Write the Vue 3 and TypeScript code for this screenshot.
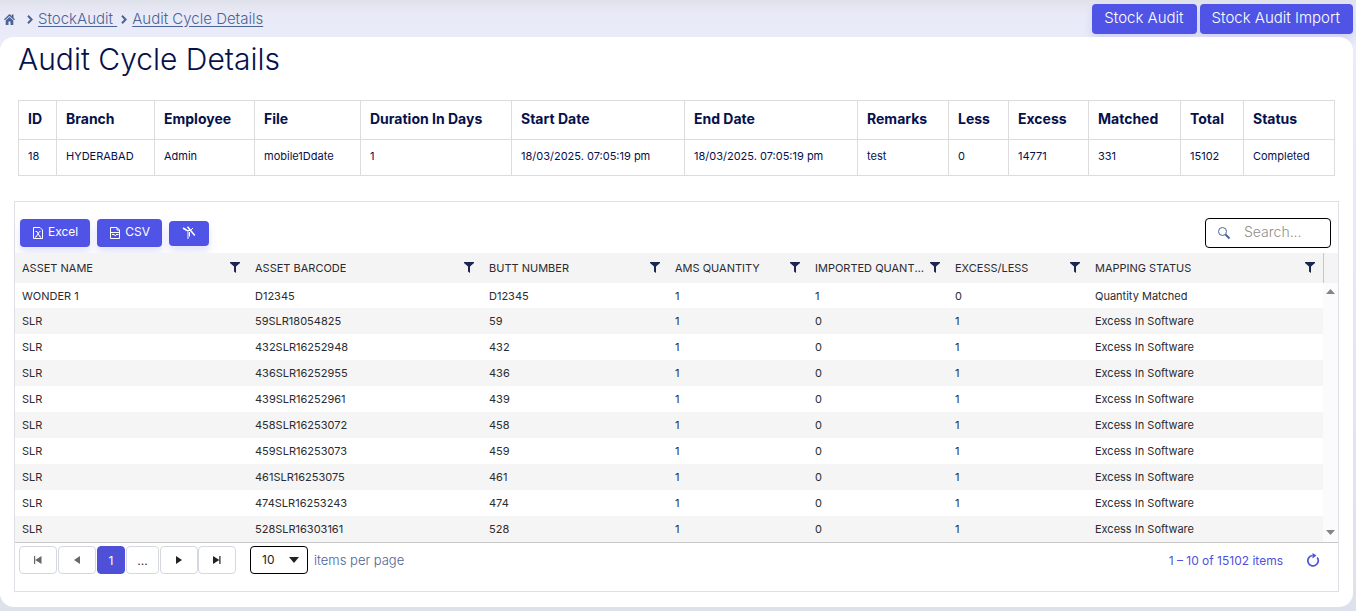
<script setup lang="ts">
import { ref } from 'vue'

interface Column {
  title: string
  width: number
}

const summary: { title: string; value: string; width: number }[] = [
  { title: 'ID', value: '18', width: 38 },
  { title: 'Branch', value: 'HYDERABAD', width: 98 },
  { title: 'Employee', value: 'Admin', width: 100 },
  { title: 'File', value: 'mobile1Ddate', width: 106 },
  { title: 'Duration In Days', value: '1', width: 151 },
  { title: 'Start Date', value: '18/03/2025. 07:05:19 pm', width: 173 },
  { title: 'End Date', value: '18/03/2025. 07:05:19 pm', width: 173 },
  { title: 'Remarks', value: 'test', width: 91 },
  { title: 'Less', value: '0', width: 60 },
  { title: 'Excess', value: '14771', width: 80 },
  { title: 'Matched', value: '331', width: 92 },
  { title: 'Total', value: '15102', width: 63 },
  { title: 'Status', value: 'Completed', width: 91 },
]
const summaryTotal = summary.reduce((sum, c) => sum + c.width, 0)

const columns: Column[] = [
  { title: 'ASSET NAME', width: 233 },
  { title: 'ASSET BARCODE', width: 234 },
  { title: 'BUTT NUMBER', width: 186 },
  { title: 'AMS QUANTITY', width: 140 },
  { title: 'IMPORTED QUANTITY', width: 140 },
  { title: 'EXCESS/LESS', width: 140 },
  { title: 'MAPPING STATUS', width: 235 },
]
const columnTotal = columns.reduce((sum, c) => sum + c.width, 0)

const excess = (barcode: string, butt: string): string[] => [
  'SLR', barcode, butt, '1', '0', '1', 'Excess In Software',
]
const rows: string[][] = [
  ['WONDER 1', 'D12345', 'D12345', '1', '1', '0', 'Quantity Matched'],
  excess('59SLR18054825', '59'),
  excess('432SLR16252948', '432'),
  excess('436SLR16252955', '436'),
  excess('439SLR16252961', '439'),
  excess('458SLR16253072', '458'),
  excess('459SLR16253073', '459'),
  excess('461SLR16253075', '461'),
  excess('474SLR16253243', '474'),
  excess('528SLR16303161', '528'),
]

const percent = (part: number, total: number) => ({ width: `${(part / total) * 100}%` })
const search = ref('')
const pageSize = ref('10')
</script>

<template>
  <div class="page">
    <header class="topbar">
      <nav class="crumbs" aria-label="Breadcrumb">
        <a href="#" class="home" aria-label="Home">
          <svg width="12" height="11" viewBox="0 0 12 11">
            <path d="M5.500 0 0 5.200l.9 1L5.500 2l4.600 4.200.9-1L9.500 3.700V.5H7.800v1.600zM5.500 3 1.700 6.500V11H4.500V7.500h2V11h2.800V6.500z" fill="currentColor" />
          </svg>
        </a>
        <svg class="chevron" width="6" height="9" viewBox="0 0 6 9"><path d="M1 .8 4.600 4.500 1 8.200" /></svg>
        <a href="#" class="crumb">StockAudit&nbsp;</a>
        <svg class="chevron" width="6" height="9" viewBox="0 0 6 9"><path d="M1 .8 4.600 4.500 1 8.200" /></svg>
        <a href="#" class="crumb">Audit Cycle Details</a>
      </nav>
      <div class="actions">
        <button type="button" class="primary large">Stock Audit</button>
        <button type="button" class="primary large">Stock Audit Import</button>
      </div>
    </header>

    <main class="panel">
      <h1>Audit Cycle Details</h1>

      <table class="summary">
        <colgroup>
          <col v-for="c in summary" :key="c.title" :style="percent(c.width, summaryTotal)" />
        </colgroup>
        <thead>
          <tr><th v-for="c in summary" :key="c.title" scope="col">{{ c.title }}</th></tr>
        </thead>
        <tbody>
          <tr><td v-for="c in summary" :key="c.title">{{ c.value }}</td></tr>
        </tbody>
      </table>

      <section class="grid">
        <div class="toolbar">
          <button type="button" class="primary tool">
            <svg width="12" height="14" viewBox="0 0 12 14" class="line">
              <path d="M1.500 1.500h6.500l2.500 2.500v8.500h-9zM3.500 5.500h1.500l3 5.500h1M8.500 5.500h-1l-3.500 5.500h-1" />
            </svg>
            <span>Excel</span>
          </button>
          <button type="button" class="primary tool">
            <svg width="12" height="14" viewBox="0 0 12 14" class="line">
              <path d="M1.500 1.500h6.500l2.500 2.500v8.500h-9zM8 1.500V4h2.500M1.500 6.500h9M3 8.500h2.500M5.500 9.500h1.500M7 8.500h2.500" />
            </svg>
            <span>CSV</span>
          </button>
          <button type="button" class="primary tool clear" aria-label="Clear filters">
            <svg width="14" height="14" viewBox="0 0 14 14" class="line">
              <path d="M1 2 5 4.500" stroke-width="1.500" />
              <path d="M5 4.500H8.500L11 2M6 4.500V13M7.500 6V10.500" />
              <path d="M5.500 .8 12.800 9.500" stroke-width="1.500" />
            </svg>
          </button>
          <label class="search">
            <svg width="14" height="14" viewBox="0 0 14 14">
              <circle cx="5.500" cy="5.500" r="4" fill="none" stroke="currentColor" />
              <path d="M8.500 8.500 12.500 12.500" stroke="currentColor" stroke-width="2" />
            </svg>
            <input v-model="search" type="text" placeholder="Search..." aria-label="Search" />
          </label>
        </div>

        <div class="data">
          <div class="view">
            <table class="records">
              <colgroup>
                <col v-for="c in columns" :key="c.title" :style="percent(c.width, columnTotal)" />
              </colgroup>
              <thead>
                <tr>
                  <th v-for="c in columns" :key="c.title" scope="col">
                    <div class="heading">
                      <span>{{ c.title }}</span>
                      <button type="button" class="filter" :aria-label="`Filter ${c.title}`">
                        <svg width="10" height="11" viewBox="0 0 10 11">
                          <path d="M0 0h10v1L6 4.500V11L4 9.500V4.500L0 1z" fill="currentColor" />
                        </svg>
                      </button>
                    </div>
                  </th>
                </tr>
              </thead>
              <tbody>
                <tr v-for="row in rows" :key="row[1]">
                  <td v-for="(cell, i) in row" :key="i">{{ cell }}</td>
                </tr>
              </tbody>
            </table>
          </div>
          <div class="rail" aria-hidden="true">
            <div class="rail-head"></div>
            <div class="track">
              <svg width="9" height="5" viewBox="0 0 9 5"><path d="M4.500 0 9 5H0z" /></svg>
              <svg width="9" height="5" viewBox="0 0 9 5"><path d="M0 0h9L4.500 5z" /></svg>
            </div>
          </div>
        </div>

        <footer class="pager">
          <button type="button" class="step off" aria-label="First page">
            <svg width="10" height="8" viewBox="0 0 10 8"><path d="M1 0h1.200v8H1zM8.500 0v8L2.200 4z" /></svg>
          </button>
          <button type="button" class="step off" aria-label="Previous page">
            <svg width="8" height="8" viewBox="0 0 8 8"><path d="M7 0v8L1 4z" /></svg>
          </button>
          <button type="button" class="number current">1</button>
          <button type="button" class="number more">...</button>
          <span class="pair">
            <button type="button" class="step" aria-label="Next page">
              <svg width="8" height="8" viewBox="0 0 8 8"><path d="M1 0v8L7 4z" /></svg>
            </button>
            <button type="button" class="step" aria-label="Last page">
              <svg width="10" height="8" viewBox="0 0 10 8"><path d="M7.300 0h1.200v8H7.300zM1 0v8L7.300 4z" /></svg>
            </button>
          </span>
          <label class="size">
            <span class="select">
              <select v-model="pageSize">
                <option>10</option>
                <option>20</option>
                <option>50</option>
              </select>
              <svg width="10" height="6" viewBox="0 0 10 6"><path d="M0 0h10L5 6z" /></svg>
            </span>
            items per page
          </label>
          <span class="count">1 – 10 of 15102 items</span>
          <button type="button" class="refresh" aria-label="Refresh">
            <svg width="14" height="14" viewBox="0 0 14 14">
              <path d="M6.500 2.500A5.200 5.200 0 1 0 11.200 4.500" fill="none" stroke="currentColor" stroke-width="1.700" />
              <path d="M6.500 0 10.500 2.500 6.500 5.500z" fill="currentColor" />
            </svg>
          </button>
        </footer>
      </section>
    </main>
  </div>
</template>

<style>
body {
  background: #e4e5f2;
}
</style>

<style scoped>
.page {
  box-sizing: border-box;
  min-height: 100vh;
  padding: 0 3px 4px 0;
  display: flex;
  flex-direction: column;
  background: linear-gradient(#dfe1ea 0, #e9eaf7 14px, #ebecf9 50px, #e6e7f5 300px, #dde1ec 100%);
  font-family: Inter, 'Liberation Sans', sans-serif;
  color: #05114b;
}

button,
input,
select {
  font: inherit;
  color: inherit;
}

button {
  cursor: pointer;
}

.topbar {
  height: 37px;
  display: flex;
  justify-content: space-between;
  align-items: center;
}

.crumbs {
  display: flex;
  align-items: center;
  padding: 1px 0 0 4px;
  font-size: 15px;
  line-height: 20px;
  font-weight: 300;
  color: #4c6396;
}

.crumbs a {
  color: inherit;
}

.home {
  display: flex;
  margin-right: 11px;
}

.crumb {
  margin-left: 5px;
  text-underline-offset: 2px;
}

.crumb + .chevron {
  margin-left: 4px;
}

.chevron {
  fill: none;
  stroke: currentColor;
  stroke-width: 2;
}

.actions {
  display: flex;
  gap: 3px;
}

.primary {
  border: 0;
  border-radius: 4px;
  background: #4f54e6;
  color: #fff;
  box-shadow: 0 6px 8px rgba(79, 84, 230, 0.16);
}

.large {
  height: 30px;
  padding: 0 13px 2px 12px;
  font-size: 15px;
  font-weight: 300;
}

.panel {
  position: relative;
  flex: 1;
  padding: 0 14px 15px;
  border-radius: 14px;
  background: #fff;
}

h1 {
  margin: 0 4px;
  padding: 4px 0 23px;
  font-size: 30px;
  line-height: 36px;
  font-weight: 300;
}

.summary {
  width: calc(100% - 8px);
  margin: 0 4px 25px;
  table-layout: fixed;
  border-collapse: collapse;
  text-align: left;
  white-space: nowrap;
}

.summary th,
.summary td {
  padding: 0 9px 3px;
  border: 1px solid #dcdcdc;
}

.summary th {
  height: 35px;
  font-size: 14px;
  font-weight: 700;
}

.summary td {
  height: 32px;
  font-size: 11px;
}

.grid {
  border: 1px solid #dfdfe6;
  color: #2b2b30;
}

.toolbar {
  display: flex;
  align-items: center;
  gap: 7px;
  padding: 16px 7px 5px 5px;
}

.tool {
  display: flex;
  align-items: center;
  gap: 4px;
  height: 28px;
  padding: 0 12px;
  font-size: 12px;
}

.tool span {
  padding-bottom: 4px;
}

.clear {
  justify-content: center;
  width: 40px;
  height: 25px;
  padding: 0;
}

.line {
  fill: none;
  stroke: currentColor;
}

.search {
  box-sizing: border-box;
  display: flex;
  align-items: center;
  gap: 13px;
  width: 126px;
  height: 30px;
  margin-left: auto;
  padding: 0 11px;
  border: 1px solid #000;
  border-radius: 4px;
  color: #4c6396;
}

.search svg {
  flex: none;
}

.search input {
  min-width: 0;
  width: 100%;
  padding: 0 0 4px;
  border: 0;
  outline: 0;
  background: none;
  font-size: 14px;
  font-weight: 300;
}

.search input::placeholder {
  color: #8f8f8f;
  opacity: 1;
}

.data {
  display: flex;
  border-bottom: 1px solid #c6c6c6;
}

.view {
  flex: 1;
  min-width: 0;
}

.records {
  width: 100%;
  table-layout: fixed;
  border-collapse: collapse;
  font-size: 11px;
  line-height: 16px;
  text-align: left;
  white-space: nowrap;
}

.records th {
  height: 30px;
  padding: 0 8px 0 7px;
  background: #f4f4f4;
  font-weight: 400;
}

.heading {
  display: flex;
  align-items: center;
  justify-content: space-between;
  gap: 4px;
}

.heading span {
  min-width: 0;
  overflow: hidden;
  text-overflow: ellipsis;
}

.filter {
  flex: none;
  display: flex;
  padding: 0 0 1px;
  border: 0;
  background: none;
  color: #1b2752;
}

.records td {
  height: 26px;
  padding: 0 7px;
}

.records tbody tr:first-child td {
  height: 25px;
}

.records tbody tr:nth-child(even) {
  background: #f5f5f5;
}

.rail {
  display: flex;
  flex-direction: column;
  width: 15px;
}

.rail-head {
  height: 30px;
  border-left: 1px solid #c6c6c6;
  background: #f4f4f4;
}

.track {
  flex: 1;
  display: flex;
  flex-direction: column;
  justify-content: space-between;
  align-items: center;
  padding: 6px 0 7px;
  background: #fbfbfb;
  fill: #858585;
}

.pager {
  display: flex;
  align-items: center;
  gap: 1px;
  padding: 3px 18px 17px 4px;
  font-size: 12px;
}

.pair {
  display: flex;
}

.step,
.number {
  box-sizing: border-box;
  display: flex;
  align-items: center;
  justify-content: center;
  height: 28px;
  padding: 0;
  border: 1px solid #d5d8e0;
  border-radius: 4px;
  background: #fff;
}

.step {
  width: 38px;
  fill: #222226;
}

.off {
  fill: #68686c;
}

.number {
  width: 28px;
}

.more {
  width: 33px;
}

.current {
  border-color: #4f50d8;
  background: #4f50d8;
  color: #fff;
}

.size {
  display: flex;
  align-items: center;
  gap: 6px;
  margin-left: 13px;
  font-size: 13px;
  font-weight: 300;
  color: #4c6396;
}

.select {
  display: grid;
  align-items: center;
  width: 58px;
}

.select select,
.select svg {
  grid-area: 1 / 1;
}

.select select {
  appearance: none;
  width: 100%;
  height: 28px;
  padding: 0 11px 2px;
  border: 1px solid #000;
  border-radius: 4px;
  background: #fff;
  font-size: 12px;
  font-weight: 400;
  color: #222226;
}

.select svg {
  justify-self: end;
  margin-right: 9px;
  fill: #222226;
  pointer-events: none;
}

.count {
  margin-left: auto;
  color: #4f50e0;
}

.refresh {
  display: flex;
  margin-left: 22px;
  padding: 0;
  border: 0;
  background: none;
  color: #4f50e0;
}
</style>
